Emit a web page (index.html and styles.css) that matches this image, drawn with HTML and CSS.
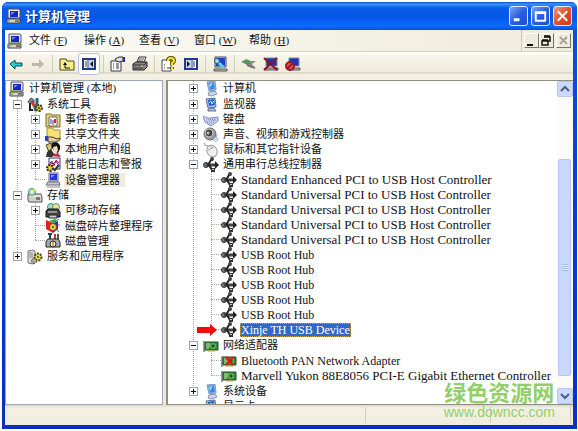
FILE: index.html
```html
<!DOCTYPE html>
<html lang="zh-CN">
<head>
<meta charset="utf-8">
<title>计算机管理</title>
<link rel="stylesheet" href="styles.css">
</head>
<body>
<svg class="sprite" aria-hidden="true">
  <symbol id="pc" viewBox="0 0 16 16"><path d="M2 1h11l1 1v8H2z" fill="#ece9d8" stroke="#555"/><path d="M4 3h8v6H4z" fill="#1526c8"/><path d="M5 4h4L5 7z" fill="#6d8cf0"/><path d="M1 11h13v4H1z" fill="#d8d5c8" stroke="#444"/><path d="M9 13h4" stroke="#222"/><path d="M2 13h2" stroke="#3a3"/></symbol>
  <symbol id="laptop" viewBox="0 0 16 16"><path d="M4 1h9v8H4z" fill="#ddd" stroke="#667"/><path d="M5 2h7v6H5z" fill="#1f35d8"/><path d="M6 3h4L6 6z" fill="#8aa4ff"/><path d="M3 10h11l1 3H1z" fill="#c9cbd8" stroke="#667"/><path d="M2 15h13" stroke="#888"/></symbol>
  <symbol id="tools" viewBox="0 0 16 16"><path d="M1 5l3-4 3 2v3L5 4 3 7z" fill="#889" stroke="#445"/><path d="M5 5l5 9" stroke="#c33" stroke-width="3"/><path d="M10 1v5l-2 8" stroke="#246a7a" stroke-width="3" fill="none"/><circle cx="12" cy="11" r="3" fill="#e3c52c" stroke="#443" stroke-width="2" stroke-dasharray="2 1"/><circle cx="12" cy="11" r="1" fill="#443"/><path d="M3 6v7h3" stroke="#222" stroke-width="2" fill="none"/></symbol>
  <symbol id="events" viewBox="0 0 16 16"><path d="M1 2h5l1 1h8v12H1z" fill="#e9d66b" stroke="#776a22"/><path d="M4 5h8v9H4z" fill="#fff" stroke="#667"/><path d="M6 7v5M8 8v5" stroke="#24b"/><path d="M10 7v4" stroke="#d22" stroke-width="2"/></symbol>
  <symbol id="share" viewBox="0 0 16 16"><path d="M2 1h5l2 2h6v9H2z" fill="#f4e17a" stroke="#a08f33"/><path d="M0 9h3v5H0z" fill="#2546c8"/><path d="M3 10h4l5 2 3-1v2l-4 2H3z" fill="#e8c9a0" stroke="#443"/></symbol>
  <symbol id="users" viewBox="0 0 16 16"><path d="M1 3l5-2 1 5-3 4z" fill="#d8c66a" stroke="#443"/><path d="M7 1c5-2 9 1 8 6l-2 4-3-1-3-4z" fill="#111"/><path d="M8 5l4-1 1 4-2 4-2-1z" fill="#f2dcc0"/><path d="M5 14l3-3 2 1 3-1 3 4z" fill="#b33"/><path d="M2 10l4-3 3 5-2 3H1z" fill="#333"/></symbol>
  <symbol id="perf" viewBox="0 0 16 16"><path d="M4 1h11v11H4z" fill="#fff" stroke="#336"/><path d="M5 8l2-4 2 5 2-6 3 3" fill="none" stroke="#d22"/><path d="M5 5l3 2 3-3 3 5" fill="none" stroke="#22c"/><circle cx="5" cy="11" r="3" fill="#e3c52c" stroke="#332" stroke-width="2" stroke-dasharray="2 1"/><path d="M9 14l5-6" stroke="#333" stroke-width="2"/></symbol>
  <symbol id="store" viewBox="0 0 16 16"><path d="M1 6h13l1 3v5H2L1 12z" fill="#d0cfc8" stroke="#555"/><path d="M3 8h11" stroke="#fff"/><path d="M9 9h4v3H9z" fill="#777"/><circle cx="5" cy="4" r="3.500" fill="#b9e6b8" stroke="#488"/><path d="M5 4l2-3 2 2z" fill="#ee4"/><circle cx="5" cy="4" r="1" fill="#fff"/></symbol>
  <symbol id="removable" viewBox="0 0 16 16"><circle cx="6" cy="4" r="3.500" fill="#a9e0c0" stroke="#488"/><circle cx="11" cy="4" r="3.500" fill="#dfe98f" stroke="#688"/><path d="M1 8l2-2h10l2 3v5H1z" fill="#444" stroke="#111"/><path d="M3 9h9" stroke="#ddd"/><path d="M4 12h8v3H4z" fill="#ccc" stroke="#222"/></symbol>
  <symbol id="defrag" viewBox="0 0 16 16"><path d="M1 2l7 3v10l-7-4z" fill="#d22"/><path d="M8 5l5-2v8l-5 4z" fill="#2a2ad0"/><path d="M4 3l6-2 3 2-5 2z" fill="#2aa84a"/><circle cx="8" cy="9" r="3.500" fill="#e9df3a" stroke="#932"/><circle cx="8" cy="9" r="1" fill="#333"/><path d="M12 2l2-1M13 7h2M12 12l2 2" stroke="#c3c"/></symbol>
  <symbol id="diskmgmt" viewBox="0 0 16 16"><path d="M3 1h4M5 1v6" stroke="#245" stroke-width="2"/><path d="M10 1v6" stroke="#c33" stroke-width="2"/><path d="M13 1v6" stroke="#555" stroke-width="2"/><path d="M1 9l2-3h10l2 3v5H1z" fill="#aaa" stroke="#222"/><circle cx="8" cy="11" r="3" fill="#eee" stroke="#222"/><path d="M8 9v4" stroke="#da2" stroke-width="2"/></symbol>
  <symbol id="services" viewBox="0 0 16 16"><path d="M1 2l5-1 2 1v12l-2 1-5-1z" fill="#ddd" stroke="#777"/><path d="M2 4h4M2 6h4M2 8h4" stroke="#888"/><circle cx="11" cy="8" r="3.500" fill="#efd94a" stroke="#443" stroke-width="2" stroke-dasharray="2 1"/><circle cx="11" cy="8" r="1" fill="#443"/><circle cx="7" cy="12" r="2.500" fill="#aaa" stroke="#443" stroke-dasharray="2 1"/></symbol>
  <symbol id="computer" viewBox="0 0 16 16"><path d="M4 1l8-1 1 9-7 1z" fill="#b7d5f5" stroke="#7892c4"/><path d="M5 2l6-1 1 7-5 1z" fill="#3d86e0"/><path d="M6 3l4-1-3 5z" fill="#9ed0ff"/><path d="M6 11l6-1 2 3-6 2-3-1z" fill="#cbd3e6" stroke="#8a94b4"/></symbol>
  <symbol id="monitor" viewBox="0 0 16 16"><path d="M3 2l9-1 1 9-8 1z" fill="#a9c4ee" stroke="#5670a8"/><path d="M5 3l6-1 1 6-6 1z" fill="#1e63c8"/><path d="M6 6l2-2 1 3 2-3" stroke="#bfeaff" fill="none"/><path d="M5 12l6-1 2 3H5z" fill="#b5bdd4" stroke="#667394"/></symbol>
  <symbol id="keyboard" viewBox="0 0 16 16"><path d="M0 5c2-2 4 2 7 1l8-1v4l-7 5-6-4z" fill="#c9d4ee" stroke="#7f8eb8"/><path d="M3 8l10-1M4 10l9-2M6 12l5-2" stroke="#6e7ea8" stroke-dasharray="1 1"/></symbol>
  <symbol id="sound" viewBox="0 0 16 16"><circle cx="7" cy="7" r="6" fill="#999" stroke="#666"/><circle cx="6" cy="6" r="4" fill="#444" stroke="#ccc"/><circle cx="5" cy="6" r="1.500" fill="#bbb"/><path d="M10 14q4-1 4-6M12 15q3-1 3-4" fill="none" stroke="#8ab0ea"/></symbol>
  <symbol id="mouse" viewBox="0 0 16 16"><path d="M1 1q0 3 4 3" fill="none" stroke="#999"/><ellipse cx="9" cy="9" rx="5" ry="6" transform="rotate(-25 9 9)" fill="#eee" stroke="#999"/><path d="M5 8l6-3M7 3l2 3" stroke="#aaa"/></symbol>
  <symbol id="usb" viewBox="0 0 16 16"><circle cx="3" cy="8" r="2.500" fill="#777" stroke="#333"/><path d="M3 8h10" stroke="#444" stroke-width="3"/><path d="M12 4l4 4-4 4z" fill="#222"/><path d="M5 8l3-5h2M6 8l3 5h2" fill="none" stroke="#222" stroke-width="2"/><circle cx="9" cy="2" r="2" fill="#444"/><path d="M8 11h4v4H8z" fill="#333"/><path d="M9 12h2v1H9z" fill="#ccc"/></symbol>
  <symbol id="nic" viewBox="0 0 16 16"><path d="M0 3h2v11H0z" fill="#999"/><path d="M2 4h13v8H2z" fill="#2f8a35" stroke="#1c5424"/><path d="M3 6h4M3 8h4M3 10h3" stroke="#d5e9a8"/><path d="M8 6h4v4H8z" fill="#174a20" stroke="#88c070"/><path d="M5 13h7" stroke="#c9a227"/></symbol>
  <symbol id="nicoff" viewBox="0 0 16 16"><use href="#nic"/><path d="M5 4l7 8M12 4l-7 8" stroke="#e01818" stroke-width="2.500"/></symbol>
  <symbol id="back" viewBox="0 0 16 16"><path d="M2 8l5-4v3h7v3H7v3z" fill="#25d0dc" stroke="#134a55"/></symbol>
  <symbol id="fwd" viewBox="0 0 16 16"><path d="M14 8L9 3v4H2v3h7v3z" fill="#bdb9a8"/></symbol>
  <symbol id="up" viewBox="0 0 16 16"><path d="M1 3h6l1 2h7v9H1z" fill="#f7f08a" stroke="#4b4820"/><path d="M6 8v4h5" fill="none" stroke="#111"/><path d="M4 9l2-3 2 3z" fill="#111"/></symbol>
  <symbol id="panel" viewBox="0 0 16 16"><path d="M2 3h12v10H2z" fill="#fff" stroke="#223a88" stroke-width="2"/><path d="M7 3v10" stroke="#223a88"/><path d="M4 6h2M4 8h2M4 10h2" stroke="#223a88"/><path d="M8 4h5v8H8z" fill="#c9d2ea"/><path d="M12 5v6L9 8z" fill="#111"/></symbol>
  <symbol id="panel2" viewBox="0 0 16 16"><path d="M2 3h12v10H2z" fill="#fff" stroke="#223a88" stroke-width="2"/><path d="M9 3v10" stroke="#223a88"/><path d="M10 6h2M10 8h2M10 10h2" stroke="#223a88"/><path d="M3 4h5v8H3z" fill="#c9d2ea"/><path d="M4 5v6l3-3z" fill="#111"/></symbol>
  <symbol id="props" viewBox="0 0 16 16"><path d="M1 5h10v10H1z" fill="#fff" stroke="#333"/><path d="M3 8h1M6 8h3M3 10h1M6 10h3M3 12h1M6 12h3" stroke="#333"/><path d="M5 3l4-2h4v4l-4 1-3-1z" fill="#ddd" stroke="#333"/><path d="M14 1v5" stroke="#2233a0" stroke-width="2"/></symbol>
  <symbol id="print" viewBox="0 0 16 16"><path d="M5 6l2-5h7l-2 5z" fill="#fff" stroke="#333"/><path d="M7 3h5M6 5h5" stroke="#555"/><path d="M1 8l3-2h11v5l-3 3H1z" fill="#888" stroke="#222"/><path d="M1 9h11l3-3M2 12h9" stroke="#333" fill="none"/><path d="M9 10h2" stroke="#ee3"/></symbol>
  <symbol id="help" viewBox="0 0 16 16"><path d="M1 4h9v11H1z" fill="#fff" stroke="#444"/><path d="M3 9h1M3 12h1M6 12h3" stroke="#333"/><path d="M7 5q0-3 3-3t3 3q0 1-2 2v2M11 11v2" fill="none" stroke="#5a5200" stroke-width="4"/><path d="M7 5q0-3 3-3t3 3q0 1-2 2v2M11 11v2" fill="none" stroke="#f4e62e" stroke-width="2"/></symbol>
  <symbol id="scan" viewBox="0 0 16 16"><path d="M3 1h11v10H3z" fill="#ddd" stroke="#445"/><path d="M4 2h9v8H4z" fill="#1b45c8"/><path d="M2 13h13v2H2z" fill="#bbb" stroke="#555"/><circle cx="5" cy="5" r="2.500" fill="#9ae3f5" stroke="#257"/><path d="M7 7l5 5" stroke="#5ed0ef" stroke-width="3"/></symbol>
  <symbol id="update" viewBox="0 0 16 16"><path d="M0 6l5-3 5 2 5 0-4 3 3 4-6-1-2-3z" fill="#8d8d86"/><path d="M1 6l5-2 4 3-4 2z" fill="#4b9b50"/><path d="M6 9l8 3" stroke="#777" stroke-width="2"/></symbol>
  <symbol id="remove" viewBox="0 0 16 16"><path d="M3 2h11v8H3z" fill="#1b35b8" stroke="#888"/><path d="M2 12h13v2H2z" fill="#bbb" stroke="#555"/><path d="M1 2l13 12M14 2L1 14" stroke="#8c1420" stroke-width="2"/></symbol>
  <symbol id="disable" viewBox="0 0 16 16"><path d="M4 2h10v8H4z" fill="#1b35c8" stroke="#888"/><path d="M4 12h11v2H4z" fill="#bbb" stroke="#555"/><circle cx="5" cy="10" r="4" fill="#b66" stroke="#a01620" stroke-width="2"/><path d="M2 13l6-6" stroke="#a01620" stroke-width="2"/></symbol>
</svg>

<div class="window">
  <header class="title">
    <svg class="icon"><use href="#pc"/></svg>
    <h1>计算机管理</h1>
    <button class="cap" aria-label="最小化"><svg viewBox="0 0 18 18"><path d="M4 13h6" stroke="#fff" stroke-width="3"/></svg></button>
    <button class="cap" aria-label="最大化"><svg viewBox="0 0 18 18"><path d="M4 5h10v9H4zM4 6h10" fill="none" stroke="#fff" stroke-width="2"/></svg></button>
    <button class="cap close" aria-label="关闭"><svg viewBox="0 0 18 18"><path d="M4 4l10 10M14 4l-10 10" stroke="#fff" stroke-width="2"/></svg></button>
  </header>
  <nav class="menu">
    <svg class="icon"><use href="#pc"/></svg>
    <button>文件 (<u>F</u>)</button><button>操作 (<u>A</u>)</button><button>查看 (<u>V</u>)</button><button>窗口 (<u>W</u>)</button><button>帮助 (<u>H</u>)</button>
    <div class="child">
      <button aria-label="最小化子窗口"><svg viewBox="0 0 12 12"><path d="M2 10h6" stroke="#111" stroke-width="2"/></svg></button>
      <button aria-label="还原子窗口"><svg viewBox="0 0 12 12"><path d="M4 2h6v4H8M4 1h6M2 6h6v4H2zM2 5h6" fill="none" stroke="#111" stroke-width="1.500"/></svg></button>
      <button class="gap" aria-label="关闭子窗口" disabled><svg viewBox="0 0 12 12"><path d="M3 2l7 7M10 2L3 9" stroke="#aaa697" stroke-width="2"/></svg></button>
    </div>
  </nav>
  <div class="tools" role="toolbar">
    <button aria-label="后退"><svg class="icon"><use href="#back"/></svg></button>
    <button aria-label="前进"><svg class="icon"><use href="#fwd"/></svg></button>
    <i></i>
    <button aria-label="上一级"><svg class="icon"><use href="#up"/></svg></button>
    <button class="on" aria-label="显示控制台树"><svg class="icon"><use href="#panel"/></svg></button>
    <i></i>
    <button aria-label="属性"><svg class="icon"><use href="#props"/></svg></button>
    <button aria-label="打印"><svg class="icon"><use href="#print"/></svg></button>
    <i></i>
    <button aria-label="帮助"><svg class="icon"><use href="#help"/></svg></button>
    <button aria-label="显示操作窗格"><svg class="icon"><use href="#panel2"/></svg></button>
    <i></i>
    <button aria-label="扫描硬件改动"><svg class="icon"><use href="#scan"/></svg></button>
    <i></i>
    <button aria-label="更新驱动程序"><svg class="icon"><use href="#update"/></svg></button>
    <button aria-label="卸载"><svg class="icon"><use href="#remove"/></svg></button>
    <button aria-label="停用"><svg class="icon"><use href="#disable"/></svg></button>
  </div>
  <main class="panes">
    <section class="side">
      <div class="row root"><svg class="icon"><use href="#pc"/></svg><span>计算机管理 (本地)</span></div>
      <ul class="tree">
        <li><div class="row"><button class="box minus" aria-label="折叠"></button><svg class="icon"><use href="#tools"/></svg><span>系统工具</span></div>
          <ul>
            <li class="row"><button class="box" aria-label="展开"></button><svg class="icon"><use href="#events"/></svg><span>事件查看器</span></li>
            <li class="row"><button class="box" aria-label="展开"></button><svg class="icon"><use href="#share"/></svg><span>共享文件夹</span></li>
            <li class="row"><button class="box" aria-label="展开"></button><svg class="icon"><use href="#users"/></svg><span>本地用户和组</span></li>
            <li class="row"><button class="box" aria-label="展开"></button><svg class="icon"><use href="#perf"/></svg><span>性能日志和警报</span></li>
            <li class="row leaf"><svg class="icon"><use href="#laptop"/></svg><span class="current">设备管理器</span></li>
          </ul></li>
        <li><div class="row"><button class="box minus" aria-label="折叠"></button><svg class="icon"><use href="#store"/></svg><span>存储</span></div>
          <ul>
            <li class="row"><button class="box" aria-label="展开"></button><svg class="icon"><use href="#removable"/></svg><span>可移动存储</span></li>
            <li class="row leaf"><svg class="icon"><use href="#defrag"/></svg><span>磁盘碎片整理程序</span></li>
            <li class="row leaf"><svg class="icon"><use href="#diskmgmt"/></svg><span>磁盘管理</span></li>
          </ul></li>
        <li class="row"><button class="box" aria-label="展开"></button><svg class="icon"><use href="#services"/></svg><span>服务和应用程序</span></li>
      </ul>
    </section>
    <section class="detail">
      <ul class="tree devices">
        <li class="row"><button class="box" aria-label="展开"></button><svg class="icon"><use href="#computer"/></svg><span>计算机</span></li>
        <li class="row"><button class="box" aria-label="展开"></button><svg class="icon"><use href="#monitor"/></svg><span>监视器</span></li>
        <li class="row"><button class="box" aria-label="展开"></button><svg class="icon"><use href="#keyboard"/></svg><span>键盘</span></li>
        <li class="row"><button class="box" aria-label="展开"></button><svg class="icon"><use href="#sound"/></svg><span>声音、视频和游戏控制器</span></li>
        <li class="row"><button class="box" aria-label="展开"></button><svg class="icon"><use href="#mouse"/></svg><span>鼠标和其它指针设备</span></li>
        <li><div class="row"><button class="box minus" aria-label="折叠"></button><svg class="icon"><use href="#usb"/></svg><span>通用串行总线控制器</span></div>
          <ul>
            <li class="row leaf wide"><svg class="icon"><use href="#usb"/></svg><span>Standard Enhanced PCI to USB Host Controller</span></li>
            <li class="row leaf wide"><svg class="icon"><use href="#usb"/></svg><span>Standard Universal PCI to USB Host Controller</span></li>
            <li class="row leaf wide"><svg class="icon"><use href="#usb"/></svg><span>Standard Universal PCI to USB Host Controller</span></li>
            <li class="row leaf wide"><svg class="icon"><use href="#usb"/></svg><span>Standard Universal PCI to USB Host Controller</span></li>
            <li class="row leaf wide"><svg class="icon"><use href="#usb"/></svg><span>Standard Universal PCI to USB Host Controller</span></li>
            <li class="row leaf"><svg class="icon"><use href="#usb"/></svg><span>USB Root Hub</span></li>
            <li class="row leaf"><svg class="icon"><use href="#usb"/></svg><span>USB Root Hub</span></li>
            <li class="row leaf"><svg class="icon"><use href="#usb"/></svg><span>USB Root Hub</span></li>
            <li class="row leaf"><svg class="icon"><use href="#usb"/></svg><span>USB Root Hub</span></li>
            <li class="row leaf"><svg class="icon"><use href="#usb"/></svg><span>USB Root Hub</span></li>
            <li class="row leaf"><svg class="arrow" viewBox="0 0 20 12"><path d="M0 3h13V0l7 6-7 6V9H0z" fill="#f00c0c"/></svg><svg class="icon"><use href="#usb"/></svg><span class="selected">Xinje TH USB Device</span></li>
          </ul></li>
        <li><div class="row"><button class="box minus" aria-label="折叠"></button><svg class="icon"><use href="#nic"/></svg><span>网络适配器</span></div>
          <ul>
            <li class="row leaf"><svg class="icon"><use href="#nicoff"/></svg><span>Bluetooth PAN Network Adapter</span></li>
            <li class="row leaf wide"><svg class="icon"><use href="#nic"/></svg><span>Marvell Yukon 88E8056 PCI-E Gigabit Ethernet Controller</span></li>
          </ul></li>
        <li class="row"><button class="box" aria-label="展开"></button><svg class="icon"><use href="#computer"/></svg><span>系统设备</span></li>
        <li class="row"><svg class="icon last"><use href="#monitor"/></svg><span>显示卡</span></li>
      </ul>
      <div class="scroll">
        <button aria-label="向上滚动"><svg viewBox="0 0 14 14"><path d="M3 9l4-4 4 4" fill="none" stroke="#4d6185" stroke-width="2"/></svg></button>
        <div class="track"><div class="thumb"></div></div>
        <button aria-label="向下滚动"><svg viewBox="0 0 14 14"><path d="M3 5l4 4 4-4" fill="none" stroke="#4d6185" stroke-width="2"/></svg></button>
      </div>
    </section>
  </main>
  <footer class="status"><span></span><span></span><span></span></footer>
</div>
<div class="mark"><strong>绿色资源网</strong><span>www.downcc.com</span></div>
</body>
</html>
```
FILE: styles.css
```css
* { box-sizing: border-box; }

body {
  margin: 0;
  padding: 2px 1px 2px 2px;
  height: 100vh;
  position: relative;
  background: #fff;
  color: #111;
  font: 11px/15px "Liberation Serif", "Noto Sans CJK SC", serif;
}

button { margin: 0; padding: 0; border: 0; background: none; color: inherit; font: inherit; }
ul { margin: 0; padding: 0; list-style: none; }
.sprite { position: absolute; width: 0; height: 0; }
.icon { width: 16px; height: 16px; flex: none; display: block; }

.window {
  height: 100%;
  display: flex;
  flex-direction: column;
  padding: 0 4px 4px 3px;
  background: linear-gradient(#0a5be6, #0a4fe0 30px, #0838d0 60%, #0830c0);
  border-radius: 6px 6px 0 0;
  overflow: hidden;
}

.title {
  flex: none;
  height: 28px;
  margin: 0 -4px 0 -3px;
  padding: 0 5px 0 4px;
  display: flex;
  align-items: center;
  gap: 3px;
  background: linear-gradient(#0a49c8, #3a94ff 2px, #0a5ce8 6px, #0557e8 16px, #0a6cff 24px, #0450d8);
}
.title h1 {
  flex: 1;
  margin: 0;
  color: #fff;
  font: bold 13px/16px "Noto Sans CJK SC", sans-serif;
  text-shadow: 1px 1px #0a2f90;
}
.cap {
  width: 19px;
  height: 20px;
  border: 1px solid #dfeaff;
  border-radius: 3px;
  background: linear-gradient(135deg, #7da4f8, #2a5ee0 50%, #1c4fd0);
}
.cap svg { display: block; width: 100%; height: 100%; }
.close { background: linear-gradient(135deg, #f09a80, #e0502c 50%, #c83a18); }

.menu {
  flex: none;
  height: 22px;
  padding-left: 2px;
  display: flex;
  align-items: center;
  background: linear-gradient(90deg, #fcfcfa, #f3f1e4 60%, #efecdd);
  border-bottom: 1px solid #d6d2c2;
}
.menu > button { width: 55px; text-align: left; font-size: 11px; white-space: nowrap; }
.menu > .icon { margin-right: 6px; }
.child {
  margin-left: auto;
  align-self: stretch;
  display: flex;
  align-items: center;
  padding: 0 2px;
  border-left: 1px solid #cfcbbb;
}
.child button {
  width: 15px;
  height: 15px;
  border: 1px solid;
  border-color: #fff #77746a #77746a #fff;
  background: #efecdf;
}
.child svg { display: block; width: 12px; height: 12px; }
.child .gap { margin-left: 2px; }

.tools {
  flex: none;
  height: 28px;
  padding: 0 0 5px;
  display: flex;
  align-items: center;
  background: linear-gradient(#fff 1px, #f7f5ea 3px, #efecdc 20px, #cbc7b5 21px, #f3f0e3 22px);
}
.tools button {
  width: 22px;
  height: 22px;
  display: grid;
  place-items: center;
}
.tools .on { background: #fff; border: 1px solid #b5c4dc; border-radius: 3px; }
.tools i { width: 1px; height: 18px; margin: 0 3px; background: #d2cebd; }

.panes {
  flex: 1;
  min-height: 0;
  display: grid;
  grid-template-columns: 158px minmax(0, 1fr);
  gap: 3px;
  background: #ece9d8;
}
.side, .detail {
  min-height: 0;
  overflow: hidden;
  background: #fff;
  border: 1px solid #9aa9b5;
}
.detail { display: flex; border-width: 1px 0 1px 2px; border-color: #8f8c80; }

.row { position: relative; height: 15px; display: flex; align-items: center; white-space: nowrap; padding-left: 7px; }
.row span { padding: 0 1px; margin-left: 3px; }
.root { padding-left: 3px; margin-bottom: 1px; }
.tree, .tree ul {
  background: repeating-linear-gradient(#a8a8a0 0 1px, transparent 1px 2px) 11px 0 / 1px calc(100% - 8px) no-repeat;
}
.tree ul { margin: 0 0 0 18px; padding-bottom: 1px; }
.box {
  flex: none;
  width: 9px;
  height: 9px;
  margin-right: 5px;
  border: 1px solid #9aa4ac;
  background:
    linear-gradient(#111, #111) center / 5px 1px no-repeat,
    linear-gradient(#111, #111) center / 1px 5px no-repeat,
    #fff;
}
.minus { background: linear-gradient(#111, #111) center / 5px 1px no-repeat, #fff; }
.leaf::before { content: ""; width: 10px; margin-left: 4px; border-top: 1px dotted #a8a8a0; }
.current { background: #efecdf; }
.side .current { padding-right: 5px; }

.devices { flex: 1; min-width: 0; height: max-content; background-position: 25px 0; background-size: 1px calc(100% - 22px); }
.devices .row { padding-left: 21px; }
.devices > .row:first-child { margin-bottom: 1px; }
.devices ul { background-position: 25px 0; }
.leaf span { font-size: 12px; line-height: 14px; }
.side .leaf span { font-size: 11px; }
.leaf.wide span { font-size: 13px; }
.selected { background: #3167c6; color: #fff; outline: 1px dotted #c9a45a; outline-offset: -1px; }
.arrow { position: absolute; left: 11px; top: 2px; width: 20px; height: 12px; }
.last { margin-left: 14px; }

.scroll { flex: none; width: 16px; display: flex; flex-direction: column; background: #fbfaf6; }
.scroll button {
  height: 16px;
  border: 1px solid #b5c8f2;
  border-radius: 2px;
  background: #cbdafc;
}
.scroll svg { display: block; width: 14px; height: 14px; }
.track { flex: 1; display: grid; grid-template-rows: 62fr 216fr 12fr; }
.thumb {
  grid-row: 2;
  margin: 0 2px 0 1px;
  border: 1px solid #b3c6f4;
  border-radius: 2px;
  background: repeating-linear-gradient(#a9bdea 0 1px, #dfe9ff 1px 2px) center / 6px 7px no-repeat, #c8d7fc;
}

.status {
  flex: none;
  height: 20px;
  display: grid;
  grid-template-columns: 361fr 126fr 80fr;
  padding: 2px;
  background: linear-gradient(#dcd8c8, #f3f1e4 3px, #efecdd);
}
.status span { border-right: 1px solid #cfcbbb; }

.mark {
  position: absolute;
  right: 23px;
  bottom: 10px;
  display: flex;
  flex-direction: column;
  align-items: center;
  color: #93cf68;
}
.mark strong { font: bold 22px/24px "Noto Sans CJK SC", sans-serif; }
.mark span { font: 14px/18px "Liberation Sans", sans-serif; }
```
